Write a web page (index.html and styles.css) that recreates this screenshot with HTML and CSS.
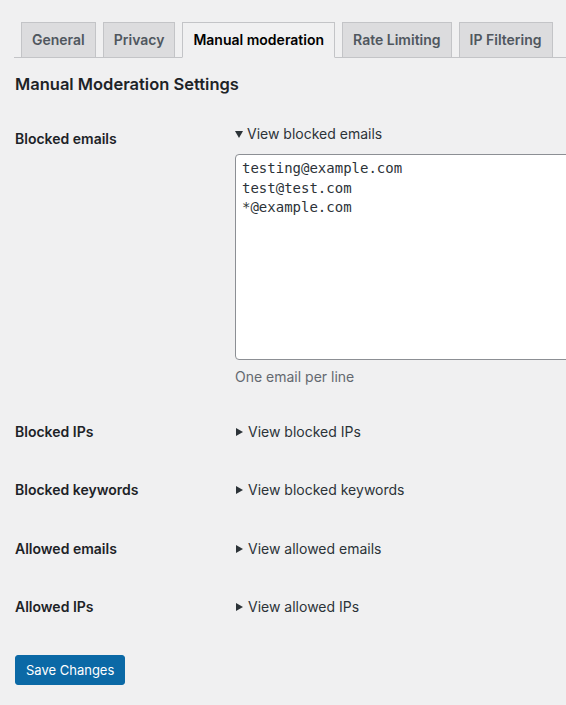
FILE: index.html
```html
<!DOCTYPE html>
<html lang="en">
<head>
<meta charset="utf-8">
<title>Manual Moderation Settings</title>
<link rel="stylesheet" href="styles.css">
</head>
<body>
<div class="wrap">
  <nav class="tabs">
    <a class="tab">General</a>
    <a class="tab">Privacy</a>
    <a class="tab tab-active">Manual moderation</a>
    <a class="tab">Rate Limiting</a>
    <a class="tab">IP Filtering</a>
  </nav>
  <h2 class="title">Manual Moderation Settings</h2>
  <form>
    <table class="form-table">
      <tr>
        <th>Blocked emails</th>
        <td class="td-open">
          <details open>
            <summary>View blocked emails</summary>
            <textarea class="list" spellcheck="false">testing@example.com
test@test.com
*@example.com</textarea>
          </details>
          <p class="description">One email per line</p>
        </td>
      </tr>
      <tr>
        <th>Blocked IPs</th>
        <td><details><summary>View blocked IPs</summary></details></td>
      </tr>
      <tr>
        <th>Blocked keywords</th>
        <td><details><summary>View blocked keywords</summary></details></td>
      </tr>
      <tr>
        <th>Allowed emails</th>
        <td><details><summary>View allowed emails</summary></details></td>
      </tr>
      <tr>
        <th>Allowed IPs</th>
        <td><details><summary>View allowed IPs</summary></details></td>
      </tr>
    </table>
    <p class="submit"><button type="button" class="button-primary">Save Changes</button></p>
  </form>
</div>
</body>
</html>
```

FILE: styles.css
```css
html { overflow: hidden; }
body {
  margin: 0;
  background: #f0f0f1;
  color: #3c434a;
  font-family: Inter, Roboto, "Liberation Sans", sans-serif;
  font-size: 14px;
}
.wrap {
  padding: 22px 0 0 14px;
  overflow: hidden;
}
.tabs {
  display: flex;
  border-bottom: 1px solid #c3c4c7;
  padding-left: 7px;
  gap: 7px;
}
.tab {
  display: block;
  padding: 5px 10px;
  font-size: 14px;
  line-height: 24px;
  font-weight: 600;
  color: #50575e;
  background: #dcdcde;
  border: 1px solid #c3c4c7;
  margin-bottom: -1px;
}
.tab-active {
  background: #f0f0f1;
  color: #000;
  border-bottom-color: #f0f0f1;
}
.title {
  margin: 15px 0 0 1px;
  font-size: 16.5px;
  line-height: 22px;
  font-weight: 600;
  color: #1d2327;
}
.form-table {
  border-collapse: collapse;
  margin-top: 15px;
}
.form-table th {
  width: 200px;
  min-width: 200px;
  box-sizing: content-box;
  padding: 20px 10px 20px 1px;
  text-align: left;
  vertical-align: top;
  font-weight: 600;
  line-height: 18.3px;
  color: #1d2327;
}
.form-table td {
  padding: 15px 10px;
  vertical-align: middle;
  line-height: 18px;
}
.form-table td.td-open {
  vertical-align: top;
  padding-top: 0;
  padding-bottom: 16px;
}
summary {
  display: flex;
  align-items: center;
  list-style: none;
  cursor: pointer;
  color: #2c3338;
}
summary::-webkit-details-marker { display: none; }
summary::before {
  content: "";
  width: 0;
  height: 0;
  margin: 0 5px 0 1px;
  border-left: 7px solid #2c3338;
  border-top: 4px solid transparent;
  border-bottom: 4px solid transparent;
}
details[open] > summary::before {
  border-top: 7px solid #2c3338;
  border-left: 4px solid transparent;
  border-right: 4px solid transparent;
  border-bottom: none;
  margin: 0 4px 0 0;
}
.td-open summary { margin-top: 15px; }
.list {
  display: block;
  box-sizing: border-box;
  margin-top: 11px;
  width: 420px;
  height: 206px;
  padding: 4px 6px;
  border: 1px solid #8c8f94;
  border-radius: 4px;
  background: #fff;
  color: #2c3338;
  font-family: "DejaVu Sans Mono", monospace;
  font-size: 14px;
  line-height: 19.5px;
  resize: none;
}
.description {
  margin: 6px 0 0;
  line-height: 21px;
  color: #646970;
}
.submit {
  margin: 9px 0 0;
  padding: 10px 0 0 1px;
}
.button-primary {
  height: 30px;
  padding: 0 10px;
  font-family: inherit;
  font-size: 13px;
  color: #fff;
  background: #0b69a6;
  border: 1px solid #0b69a6;
  border-radius: 3px;
}
```
